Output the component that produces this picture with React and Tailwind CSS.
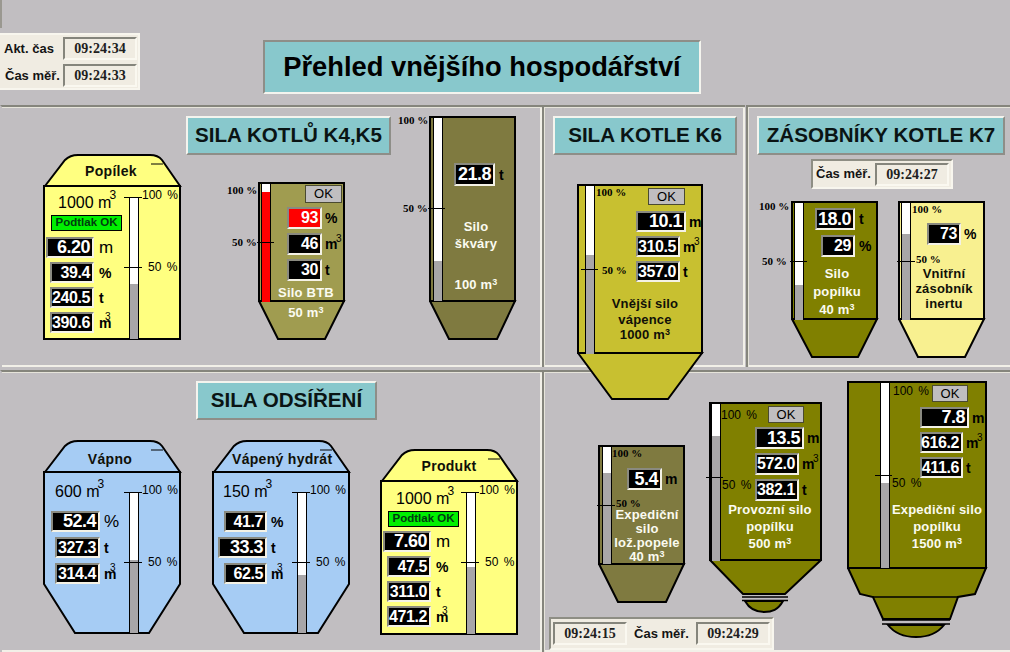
const sans = { fontFamily: '"Liberation Sans", Arial, sans-serif' };

function Panel({ edge = false, className = "", children }) {
  return (
    <div
      className={
        "relative border-t-2 border-l-2 border-t-[#85857c] " +
        (edge
          ? "border-l-[#c1bec1] shadow-[inset_0_1px_0_#e6e4da,inset_-2px_-2px_0_#f2f0e8] "
          : "border-l-[#85857c] shadow-[inset_1px_1px_0_#e6e4da,inset_-2px_-2px_0_#f2f0e8] ") +
        className
      }
    >
      {children}
    </div>
  );
}

function Title({ className = "", children }) {
  return (
    <div className={"flex items-center justify-center bg-[#88c8cc] border-2 border-t-[#f4f4ee] border-l-[#f4f4ee] border-b-[#8e8e88] border-r-[#8e8e88] text-[20.6px] font-bold text-[#0a1414] " + className}>
      {children}
    </div>
  );
}

function Clock({ children }) {
  return (
    <div className="flex h-[23px] w-[74px] items-center justify-center border-2 border-t-[#85857c] border-l-[#85857c] border-b-[#faf8f0] border-r-[#faf8f0] bg-[#f0ece2] font-['Liberation_Serif'] text-[14px] font-bold text-[#202020]">
      {children}
    </div>
  );
}

function Val({ v, w, h, big, red }) {
  return (
    <div
      className={
        "flex items-center justify-end border-2 border-t-[#8a8a80] border-l-[#8a8a80] border-b-[#f4f2e6] border-r-[#f4f2e6] pr-[2px] font-bold text-white " +
        (big ? "text-[18px] tracking-[-0.5px] " : "text-[16px] tracking-[-0.4px] ") +
        (red ? "bg-[#ff0000] " : "bg-black ") +
        w + " " + h
      }
    >
      {v}
    </div>
  );
}

function Unit({ u, reg, near, gap = "ml-[4px]" }) {
  const cube = u === "m3";
  return (
    <span className={"relative leading-none text-black " + gap + " " + (reg ? "text-[17px] font-normal" : "text-[14px] font-bold")}>
      {cube ? "m" : u}
      {cube && (
        <span className={"absolute text-[10px] font-normal " + (near ? "left-[6px] top-[-4px]" : "left-[11px] top-[-3px]")}>3</span>
      )}
    </span>
  );
}

function Stack({ className = "", cell = "", h, rows, gap, near }) {
  return (
    <div className={"absolute flex flex-col items-start " + className}>
      {rows.map((r, i) => (
        <div key={i} className="flex items-center">
          <div className={"flex justify-end " + cell}>
            <Val v={r.v} w={r.w} h={h} big={r.big} red={r.red} />
          </div>
          <Unit u={r.u} reg={r.reg} gap={gap} near={near} />
        </div>
      ))}
    </div>
  );
}

function Bar({ className = "", fill = "bg-[#a8a6a8]", level, top = "bg-white" }) {
  return (
    <div className={"absolute flex flex-col border-x border-black " + top + " " + className}>
      <div className="flex-1" />
      <div className={fill + " " + level} />
    </div>
  );
}

function Tick({ className = "" }) {
  return <div className={"absolute h-[1px] bg-black " + className} />;
}

function Pct({ className = "", t, big }) {
  return (
    <span
      className={
        "absolute whitespace-pre leading-[16px] text-black " +
        (big
          ? "font-['Liberation_Sans'] text-[12px] [word-spacing:2px] "
          : "font-['Liberation_Serif'] text-[11px] font-bold ") +
        className
      }
    >
      {t}
    </span>
  );
}

function M3({ t }) {
  return (
    <>
      {t} m<sup className="-top-[0.4em] text-[9px]">3</sup>
    </>
  );
}

function Caps({ className = "", white, lines }) {
  return (
    <div
      className={
        "absolute flex flex-col items-center text-center whitespace-nowrap text-[13px] font-bold tracking-[0.2px] " +
        (white ? "text-[#fbfbf0] " : "text-[#101008] ") +
        className
      }
    >
      {lines.map((l, i) => (
        <div key={i}>{l}</div>
      ))}
    </div>
  );
}

function Head({ className = "", children }) {
  return (
    <div className={"absolute text-center whitespace-nowrap text-[14px] font-bold leading-[16px] tracking-[0.3px] text-[#101008] " + className}>
      {children}
    </div>
  );
}

function OkBox({ className = "" }) {
  return (
    <div className={"absolute flex items-center justify-center border border-[#4a4a30] bg-[#c0bec0] text-[13px] text-black " + className}>
      OK
    </div>
  );
}

function Lamp({ className = "" }) {
  return (
    <div className={"absolute flex items-center justify-center border border-black bg-[#00f000] text-[11.5px] font-bold text-[#003c10] " + className}>
      Podtlak OK
    </div>
  );
}

function Shape({ view, fill, d, extra }) {
  return (
    <svg className="absolute inset-0 h-full w-full" viewBox={view}>
      <path d={d} fill={fill} stroke="black" strokeWidth="2" strokeLinejoin="miter" />
      {extra}
    </svg>
  );
}

function Vol({ className = "", t }) {
  return (
    <span className={"absolute whitespace-nowrap text-[16px] leading-[18px] text-black " + className}>
      {t} m<sup className="-top-[0.75em] -ml-[2px] text-[12px]">3</sup>
    </span>
  );
}

const DOME_Y = (x, y1, y2) =>
  `M${x + 1} ${y2} L${x + 21} ${y1 + 5} Q${x + 26} ${y1} ${x + 34} ${y1} L${x + 106} ${y1} Q${x + 114} ${y1} ${x + 118} ${y1 + 5} L${x + 136} ${y2} Z `;

export default function App() {
  return (
    <div className="relative flex h-[652px] w-[1010px] flex-col overflow-hidden bg-[#c1bec1]" style={sans}>
      <div className="absolute left-0 top-0 h-[28px] w-[2px] bg-[#9a9890]" />

      {/* Header */}
      <header className="flex h-[105px] items-start">
        <div className="mt-[33px] flex h-[57px] w-[140px] flex-col gap-[4px] border-2 border-l-0 border-t-[#f8f6ee] border-r-[#f8f6ee] border-b-[#f8f6ee] bg-[#f0ece2] pr-[1px] pt-[2px] text-[13px] font-bold text-[#141414]">
          <div className="flex items-center justify-between pl-[4px]">
            <span>Akt. čas</span>
            <Clock>09:24:34</Clock>
          </div>
          <div className="flex items-center justify-between pl-[5px]">
            <span>Čas měř.</span>
            <Clock>09:24:33</Clock>
          </div>
        </div>
        <div className="ml-[123px] mt-[40px] flex h-[54px] w-[438px] items-center justify-center border-2 border-t-[#8e8e88] border-l-[#8e8e88] border-b-[#f4f4ee] border-r-[#f4f4ee] bg-[#88c8cc] text-[27.3px] font-bold text-black">
          Přehled vnějšího hospodářství
        </div>
      </header>

      {/* Panels */}
      <main className="grid flex-1 grid-cols-[542px_204px_266px] grid-rows-[265px_282px]">
        {/* Panel A */}
        <Panel edge className="mb-[3px]">
          <Title className="ml-[184px] mt-[9px] h-[39px] w-[205px]">SILA KOTLŮ K4,K5</Title>

          {/* Popílek */}
          <div className="absolute left-[41px] top-[47px] h-[186px] w-[139px]">
            <Shape
              view="43 154 139 186"
              fill="#ffff80"
              d={DOME_Y(44, 155, 186) + "M44 186 H180 V339 H44 Z"}
              extra={<path d="M151 164 H163" stroke="black" />}
            />
            <Head className="left-[18px] top-[9px] w-[100px]">Popílek</Head>
            <Vol className="left-[15px] top-[40px]" t="1000" />
            <Lamp className="left-[8px] top-[61px] h-[16px] w-[71px]" />
            <Bar className="left-[86px] top-[43px] h-[142px] w-[10px]" level="h-[55px]" />
            <Tick className="left-[81px] top-[43px] w-[18px]" />
            <Tick className="left-[81px] top-[113px] w-[18px]" />
            <Pct big className="left-[99px] top-[33px]" t="100 %" />
            <Pct big className="left-[105px] top-[105px]" t="50 %" />
            <Stack
              near
              className="left-[3px] top-[83px] gap-[4px]"
              cell="w-[48px]"
              h="h-[21px]"
              gap="ml-[5px]"
              rows={[
                { v: "6.20", u: "m", w: "w-[48px]", big: true, reg: true },
                { v: "39.4", u: "%", w: "w-[44px]" },
                { v: "240.5", u: "t", w: "w-[44px]" },
                { v: "390.6", u: "m3", w: "w-[44px]" },
              ]}
            />
          </div>

          {/* Silo BTB */}
          <div className="absolute left-[256px] top-[75px] h-[158px] w-[88px]">
            <Shape view="258 182 88 158" fill="#a09c50" d="M259 183 H344 V301 H259 Z M259 301 L278 339 H325 L344 301 Z" />
            <Bar className="left-[3px] top-[2px] h-[118px] w-[10px]" fill="bg-[#ff0000]" level="h-[110px]" />
            <Tick className="left-[-1px] top-[60px] w-[17px]" />
            <Pct className="left-[-31px] top-[0px]" t="100 %" />
            <Pct className="left-[-26px] top-[52px]" t="50 %" />
            <OkBox className="left-[47px] top-[3px] h-[18px] w-[37px]" />
            <Stack
              className="left-[29px] top-[25px] gap-[4px]"
              h="h-[22px]"
              gap="ml-[3px]"
              rows={[
                { v: "93", u: "%", w: "w-[35px]", red: true },
                { v: "46", u: "m3", w: "w-[35px]" },
                { v: "30", u: "t", w: "w-[35px]" },
              ]}
            />
            <Caps white className="left-[12px] top-[101px] w-[72px] leading-[20px]" lines={["Silo BTB", <M3 t="50" />]} />
          </div>

          {/* Silo škváry */}
          <div className="absolute left-[427px] top-[9px] h-[224px] w-[88px]">
            <Shape view="429 116 88 224" fill="#7f7a40" d="M430 117 H515 V301 H430 Z M430 301 L449 339 H497 L515 301 Z" />
            <Bar className="left-[4px] top-[2px] h-[183px] w-[10px]" level="h-[40px]" />
            <Tick className="left-[-1px] top-[92px] w-[17px]" />
            <Pct className="left-[-31px] top-[-4px]" t="100 %" />
            <Pct className="left-[-26px] top-[84px]" t="50 %" />
            <Stack
              className="left-[25px] top-[47px]"
              h="h-[23px]"
              rows={[{ v: "21.8", u: "t", w: "w-[41px]", big: true }]}
            />
            <Caps white className="left-[17px] top-[102px] w-[60px] gap-[24px] leading-[17px]" lines={[<>Silo<br />škváry</>, <M3 t="100" />]} />
          </div>
        </Panel>

        {/* Panel B */}
        <Panel className="z-10 mb-[3px] mr-[1px]">
          <Title className="ml-[9px] mt-[9px] h-[39px] w-[184px]">SILA KOTLE K6</Title>
          <div className="absolute left-[33px] top-[77px] h-[217px] w-[127px]">
            <Shape view="577 184 127 217" fill="#c8c030" d="M578 185 H702 V353 H578 Z M578 353 L612 399 H668 L702 353 Z" />
            <Bar className="left-[8px] top-[2px] h-[168px] w-[10px]" level="h-[99px]" />
            <Tick className="left-[4px] top-[85px] w-[17px]" />
            <Pct className="left-[19px] top-[0px]" t="100 %" />
            <Pct className="left-[25px] top-[78px]" t="50 %" />
            <OkBox className="left-[71px] top-[4px] h-[17px] w-[37px]" />
            <Stack
              className="left-[59px] top-[27px] gap-[4px]"
              h="h-[21px]"
              gap="ml-[3px]"
              rows={[
                { v: "10.1", u: "m", w: "w-[50px]", big: true },
                { v: "310.5", u: "m3", w: "w-[44px]" },
                { v: "357.0", u: "t", w: "w-[44px]" },
              ]}
            />
            <Caps className="left-[18px] top-[112px] w-[100px] leading-[15.5px]" lines={["Vnější silo", "vápence", <M3 t="1000" />]} />
          </div>
        </Panel>

        {/* Panel C */}
        <Panel className="mb-[3px]">
          <Title className="ml-[9px] mt-[9px] h-[39px] w-[248px]">ZÁSOBNÍKY KOTLE K7</Title>
          <div className="absolute left-[63px] top-[52px] flex h-[30px] w-[142px] items-center justify-between border-2 border-t-[#8e8e84] border-l-[#8e8e84] border-b-[#f8f6ee] border-r-[#f8f6ee] bg-[#f0ece2] pl-[3px] pr-[2px] text-[13px] font-bold text-[#141414]">
            <span>Čas měř.</span>
            <Clock>09:24:27</Clock>
          </div>

          {/* Silo popílku */}
          <div className="absolute left-[43px] top-[94px] h-[158px] w-[88px]">
            <Shape view="791 201 88 158" fill="#808000" d="M792 202 H877 V319 H792 Z M792 319 L812 357 H858 L877 319 Z" />
            <Bar className="left-[3px] top-[2px] h-[117px] w-[10px]" level="h-[35px]" />
            <Tick className="left-[-1px] top-[60px] w-[17px]" />
            <Pct className="left-[-32px] top-[-3px]" t="100 %" />
            <Pct className="left-[-29px] top-[52px]" t="50 %" />
            <Stack
              className="left-[24px] top-[7px] gap-[5px]"
              cell="w-[40px]"
              h="h-[22px]"
              rows={[
                { v: "18.0", u: "t", w: "w-[40px]", big: true },
                { v: "29", u: "%", w: "w-[34px]" },
              ]}
            />
            <Caps white className="left-[16px] top-[64px] w-[60px] leading-[18px]" lines={["Silo", "popílku", <M3 t="40" />]} />
          </div>

          {/* Vnitřní */}
          <div className="absolute left-[150px] top-[94px] h-[158px] w-[88px]">
            <Shape view="898 201 88 158" fill="#f8f090" d="M899 202 H984 V319 H899 Z M899 319 L918 357 H965 L984 319 Z" />
            <Bar className="left-[3px] top-[2px] h-[117px] w-[10px]" level="h-[86px]" />
            <Tick className="left-[-1px] top-[60px] w-[18px]" />
            <Pct className="left-[14px] top-[0px]" t="100 %" />
            <Pct className="left-[18px] top-[50px]" t="50 %" />
            <Stack
              className="left-[29px] top-[22px]"
              h="h-[22px]"
              gap="ml-[3px]"
              rows={[{ v: "73", u: "%", w: "w-[34px]" }]}
            />
            <Caps className="left-[16px] top-[65px] w-[60px] leading-[15px]" lines={["Vnitřní", "zásobník", "inertu"]} />
          </div>
        </Panel>

        {/* Panel A2 */}
        <Panel edge>
          <Title className="ml-[194px] mt-[9px] h-[39px] w-[181px]">SILA ODSÍŘENÍ</Title>

          {/* Vápno */}
          <div className="absolute left-[41px] top-[68px] h-[195px] w-[139px]">
            <Shape
              view="43 440 139 195"
              fill="#a6ccf4"
              d={DOME_Y(44, 441, 472) + "M44 472 H180 V584 L149 633 H75 L44 584 Z"}
              extra={<path d="M151 450 H163" stroke="black" />}
            />
            <Head className="left-[17px] top-[11px] w-[100px]">Vápno</Head>
            <Vol className="left-[12px] top-[43px]" t="600" />
            <Bar className="left-[86px] top-[52px] h-[141px] w-[10px]" level="h-[73px]" />
            <Tick className="left-[81px] top-[52px] w-[18px]" />
            <Tick className="left-[81px] top-[122px] w-[18px]" />
            <Pct big className="left-[99px] top-[42px]" t="100 %" />
            <Pct big className="left-[105px] top-[114px]" t="50 %" />
            <Stack
              near
              className="left-[8px] top-[71px] gap-[5px]"
              cell="w-[49px]"
              h="h-[21px]"
              gap="ml-[4px]"
              rows={[
                { v: "52.4", u: "%", w: "w-[49px]", big: true, reg: true },
                { v: "327.3", u: "t", w: "w-[45px]" },
                { v: "314.4", u: "m3", w: "w-[45px]" },
              ]}
            />
          </div>

          {/* Vápený hydrát */}
          <div className="absolute left-[210px] top-[68px] h-[195px] w-[139px]">
            <Shape
              view="212 440 139 195"
              fill="#a6ccf4"
              d={DOME_Y(213, 441, 472) + "M213 472 H349 V584 L318 633 H244 L213 584 Z"}
              extra={<path d="M320 450 H332" stroke="black" />}
            />
            <Head className="left-[20px] top-[11px] w-[100px]">Vápený hydrát</Head>
            <Vol className="left-[11px] top-[43px]" t="150" />
            <Bar className="left-[85px] top-[52px] h-[141px] w-[10px]" level="h-[58px]" />
            <Tick className="left-[80px] top-[52px] w-[18px]" />
            <Tick className="left-[80px] top-[122px] w-[18px]" />
            <Pct big className="left-[98px] top-[42px]" t="100 %" />
            <Pct big className="left-[104px] top-[114px]" t="50 %" />
            <Stack
              near
              className="left-[6px] top-[71px] gap-[5px]"
              cell="w-[49px]"
              h="h-[21px]"
              rows={[
                { v: "41.7", u: "%", w: "w-[43px]" },
                { v: "33.3", u: "t", w: "w-[49px]", big: true },
                { v: "62.5", u: "m3", w: "w-[43px]" },
              ]}
            />
          </div>

          {/* Produkt */}
          <div className="absolute left-[378px] top-[77px] h-[186px] w-[139px]">
            <Shape
              view="380 449 139 186"
              fill="#ffff80"
              d={DOME_Y(381, 450, 481) + "M381 481 H517 V634 H381 Z"}
              extra={<path d="M488 459 H500" stroke="black" />}
            />
            <Head className="left-[19px] top-[9px] w-[100px]">Produkt</Head>
            <Vol className="left-[16px] top-[41px]" t="1000" />
            <Lamp className="left-[8px] top-[62px] h-[16px] w-[71px]" />
            <Bar className="left-[86px] top-[43px] h-[142px] w-[10px]" level="h-[67px]" />
            <Tick className="left-[81px] top-[43px] w-[18px]" />
            <Tick className="left-[81px] top-[113px] w-[18px]" />
            <Pct big className="left-[99px] top-[33px]" t="100 %" />
            <Pct big className="left-[105px] top-[105px]" t="50 %" />
            <Stack
              near
              className="left-[3px] top-[82px] gap-[4px]"
              cell="w-[48px]"
              h="h-[21px]"
              gap="ml-[5px]"
              rows={[
                { v: "7.60", u: "m", w: "w-[48px]", big: true, reg: true },
                { v: "47.5", u: "%", w: "w-[44px]" },
                { v: "311.0", u: "t", w: "w-[44px]" },
                { v: "471.2", u: "m3", w: "w-[44px]" },
              ]}
            />
          </div>
        </Panel>

        {/* Panel D */}
        <Panel className="col-span-2">
          {/* Lož. popele */}
          <div className="absolute left-[54px] top-[73px] h-[158px] w-[88px]">
            <Shape view="598 445 88 158" fill="#7f7a40" d="M599 446 H684 V564 H599 Z M599 564 L618 602 H666 L684 564 Z" />
            <Bar className="left-[4px] top-[2px] h-[117px] w-[10px]" level="h-[91px]" />
            <Tick className="left-[-1px] top-[60px] w-[18px]" />
            <Pct className="left-[14px] top-[0px]" t="100 %" />
            <Pct className="left-[18px] top-[50px]" t="50 %" />
            <Stack
              className="left-[29px] top-[23px]"
              h="h-[22px]"
              gap="ml-[3px]"
              rows={[{ v: "5.4", u: "m", w: "w-[35px]", big: true }]}
            />
            <Caps white className="left-[14px] top-[63px] w-[70px] leading-[14px]" lines={["Expediční", "silo", "lož.popele", <M3 t="40" />]} />
          </div>

          {/* Provozní */}
          <div className="absolute left-[165px] top-[30px] h-[212px] w-[113px]">
            <Shape
              view="709 402 113 212"
              fill="#808000"
              d="M710 403 H821 V560 H710 Z M710 560 L743 594 H785 L821 560 Z M745 601 C750 610 758 612 764 612 C772 612 778 610 783 601 Z"
              extra={<path d="M742 597 H788 M742 600.5 H788" stroke="black" strokeWidth="1.6" />}
            />
            <Bar className="left-[2px] top-[2px] h-[157px] w-[10px]" level="h-[125px]" />
            <Tick className="left-[-3px] top-[75px] w-[17px]" />
            <Pct big className="left-[12px] top-[5px]" t="100 %" />
            <Pct big className="left-[13px] top-[75px]" t="50 %" />
            <OkBox className="left-[59px] top-[4px] h-[17px] w-[36px]" />
            <Stack
              className="left-[46px] top-[25px] gap-[4px]"
              h="h-[22px]"
              gap="ml-[3px]"
              rows={[
                { v: "13.5", u: "m", w: "w-[49px]", big: true },
                { v: "572.0", u: "m3", w: "w-[44px]" },
                { v: "382.1", u: "t", w: "w-[44px]" },
              ]}
            />
            <Caps white className="left-[11px] top-[99px] w-[100px] leading-[17px]" lines={["Provozní silo", "popílku", <M3 t="500" />]} />
          </div>

          {/* Expediční 1500 */}
          <div className="absolute left-[303px] top-[9px] h-[258px] w-[141px]">
            <Shape
              view="847 381 141 258"
              fill="#808000"
              d="M848 382 H986 V568 H848 Z M848 568 L860 594 L873 597 L883 619 H950 L958 597 L975 594 L986 568 Z M888 625 C895 634 905 637 916 637 C927 637 937 634 944 625 Z"
              extra={<path d="M873 597 H958 M882 620 H950 M882 624 H950" stroke="black" strokeWidth="1.6" />}
            />
            <Bar className="left-[33px] top-[2px] h-[185px] w-[10px]" level="h-[85px]" />
            <Tick className="left-[28px] top-[94px] w-[17px]" />
            <Pct big className="left-[46px] top-[2px]" t="100 %" />
            <Pct big className="left-[45px] top-[94px]" t="50 %" />
            <OkBox className="left-[85px] top-[4px] h-[17px] w-[36px]" />
            <Stack
              className="left-[73px] top-[26px] gap-[4px]"
              h="h-[21px]"
              gap="ml-[3px]"
              rows={[
                { v: "7.8", u: "m", w: "w-[49px]", big: true },
                { v: "616.2", u: "m3", w: "w-[43px]" },
                { v: "411.6", u: "t", w: "w-[43px]" },
              ]}
            />
            <Caps white className="left-[40px] top-[120px] w-[100px] leading-[17px]" lines={["Expediční silo", "popílku", <M3 t="1500" />]} />
          </div>

          {/* Time strip */}
          <div className="absolute left-[5px] top-[245px] flex h-[33px] w-[225px] items-center justify-between border-2 border-t-[#8e8e84] border-l-[#8e8e84] border-b-[#f8f6ee] border-r-[#f8f6ee] bg-[#f0ece2] px-[2px] text-[13px] font-bold text-[#141414]">
            <Clock>09:24:15</Clock>
            <span>Čas měř.</span>
            <Clock>09:24:29</Clock>
          </div>
        </Panel>
      </main>
    </div>
  );
}
